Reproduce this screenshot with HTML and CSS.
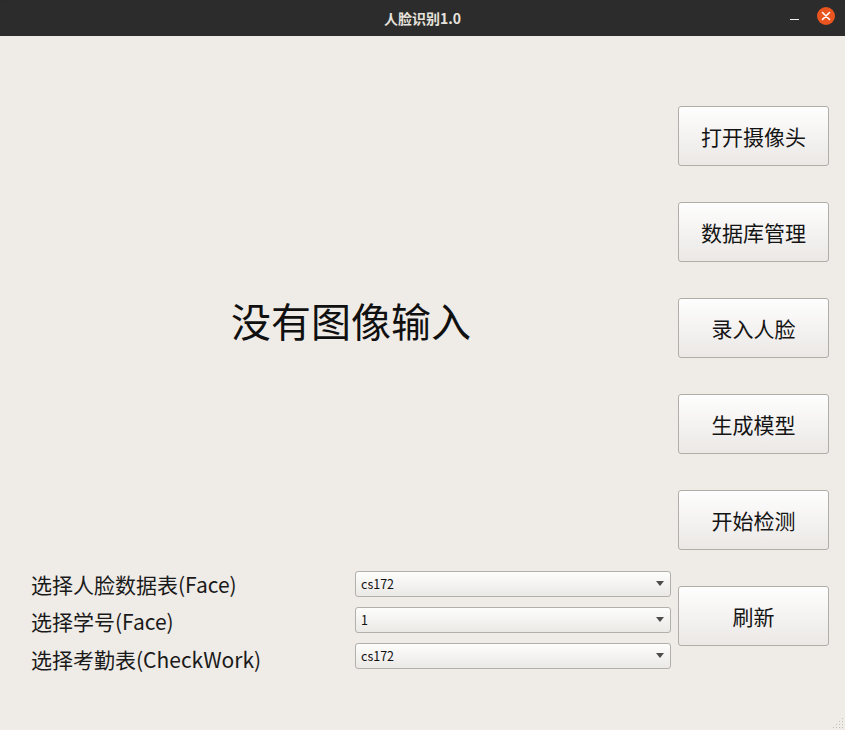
FILE: index.html
```html
<!DOCTYPE html>
<html lang="zh-CN">
<head>
<meta charset="utf-8">
<title>人脸识别1.0</title>
<link rel="stylesheet" href="styles.css">
</head>
<body>
<div class="window">
  <div class="titlebar">
    <span class="title">人脸识别1.0</span>
    <div class="controls">
      <span class="minimize"></span>
      <span class="close">
        <svg width="18" height="18" viewBox="0 0 18 18"><path d="M5.5 5.5 L12.5 12.5 M12.5 5.5 L5.5 12.5" stroke="#fff" stroke-width="1.6" stroke-linecap="round"/></svg>
      </span>
    </div>
  </div>
  <div class="content">
    <div class="left">
      <div class="display"><span class="display-text">没有图像输入</span></div>
      <div class="form">
        <div class="labels">
          <div class="label">选择人脸数据表(Face)</div>
          <div class="label">选择学号(Face)</div>
          <div class="label">选择考勤表(CheckWork)</div>
        </div>
        <div class="combos">
          <div class="combo"><span>cs172</span><i class="arrow"></i></div>
          <div class="combo"><span>1</span><i class="arrow"></i></div>
          <div class="combo"><span>cs172</span><i class="arrow"></i></div>
        </div>
      </div>
    </div>
    <div class="buttons">
      <button class="btn">打开摄像头</button>
      <button class="btn">数据库管理</button>
      <button class="btn">录入人脸</button>
      <button class="btn">生成模型</button>
      <button class="btn">开始检测</button>
      <button class="btn">刷新</button>
    </div>
    <svg class="grip" width="14" height="14" viewBox="0 0 14 14">
      <g fill="#c3bfba">
        <rect x="11" y="2" width="1" height="1"/>
        <rect x="8" y="5" width="1" height="1"/><rect x="11" y="5" width="1" height="1"/>
        <rect x="5" y="8" width="1" height="1"/><rect x="8" y="8" width="1" height="1"/><rect x="11" y="8" width="1" height="1"/>
        <rect x="2" y="11" width="1" height="1"/><rect x="5" y="11" width="1" height="1"/><rect x="8" y="11" width="1" height="1"/><rect x="11" y="11" width="1" height="1"/>
      </g>
    </svg>
  </div>
</div>
</body>
</html>
```

FILE: styles.css
```css
* { box-sizing: border-box; }
html, body {
  margin: 0;
  padding: 0;
  background: #2b2b2b;
}
body {
  font-family: "Noto Sans CJK SC", "Noto Sans", sans-serif;
}
.window {
  width: 845px;
  height: 730px;
  display: flex;
  flex-direction: column;
  overflow: hidden;
}
.titlebar {
  height: 36px;
  background: #2c2c2c;
  display: flex;
  align-items: center;
  justify-content: center;
  position: relative;
  border-radius: 6px 6px 0 0;
}
.title {
  color: #e6e2dc;
  font-size: 14px;
  font-weight: bold;
  letter-spacing: 0;
}
.controls {
  position: absolute;
  right: 10px;
  top: 7px;
  display: flex;
  align-items: center;
  gap: 18px;
  height: 18px;
}
.minimize {
  display: block;
  width: 9px;
  height: 1px;
  background: #f2f2f2;
  margin-top: 6px;
}
.close {
  width: 18px;
  height: 18px;
  border-radius: 50%;
  background: #e9541f;
  display: flex;
}
.content {
  flex: 1;
  background: #efebe7;
  display: flex;
  position: relative;
}
.left {
  width: 671px;
  display: flex;
  flex-direction: column;
  padding-left: 31px;
}
.display {
  flex: 1;
  display: flex;
  justify-content: center;
  padding-top: 260px;
}
.display-text {
  font-size: 40px;
  line-height: 48px;
  height: 48px;
  color: #101010;
}
.form {
  display: flex;
  align-items: flex-start;
  margin-bottom: 52px;
}
.labels {
  width: 324px;
}
.label {
  font-size: 21px;
  line-height: 37.5px;
  height: 37.5px;
  color: #1a1a1a;
  white-space: nowrap;
}
.combos {
  width: 316px;
  padding-top: 5px;
  display: flex;
  flex-direction: column;
  gap: 10px;
}
.combo {
  height: 26px;
  border: 1px solid #b3afaa;
  border-radius: 3px;
  background: linear-gradient(#fdfdfc, #ebe9e6);
  display: flex;
  align-items: center;
  justify-content: space-between;
  padding: 0 6px 0 5px;
  font-size: 12.5px;
  color: #111;
}
.arrow {
  width: 0;
  height: 0;
  border-left: 4.5px solid transparent;
  border-right: 4.5px solid transparent;
  border-top: 5px solid #4d4d4d;
}
.buttons {
  margin-left: 7px;
  padding-top: 70px;
  display: flex;
  flex-direction: column;
  gap: 36px;
}
.btn {
  width: 151px;
  height: 60px;
  border: 1px solid #b1ada8;
  border-radius: 3px;
  background: linear-gradient(#fefefe, #ebe8e5);
  font-family: "Noto Sans CJK SC", "Noto Sans", sans-serif;
  font-size: 21px;
  color: #141414;
  padding: 0;
}
.grip {
  position: absolute;
  right: 0;
  bottom: 0;
}
```
